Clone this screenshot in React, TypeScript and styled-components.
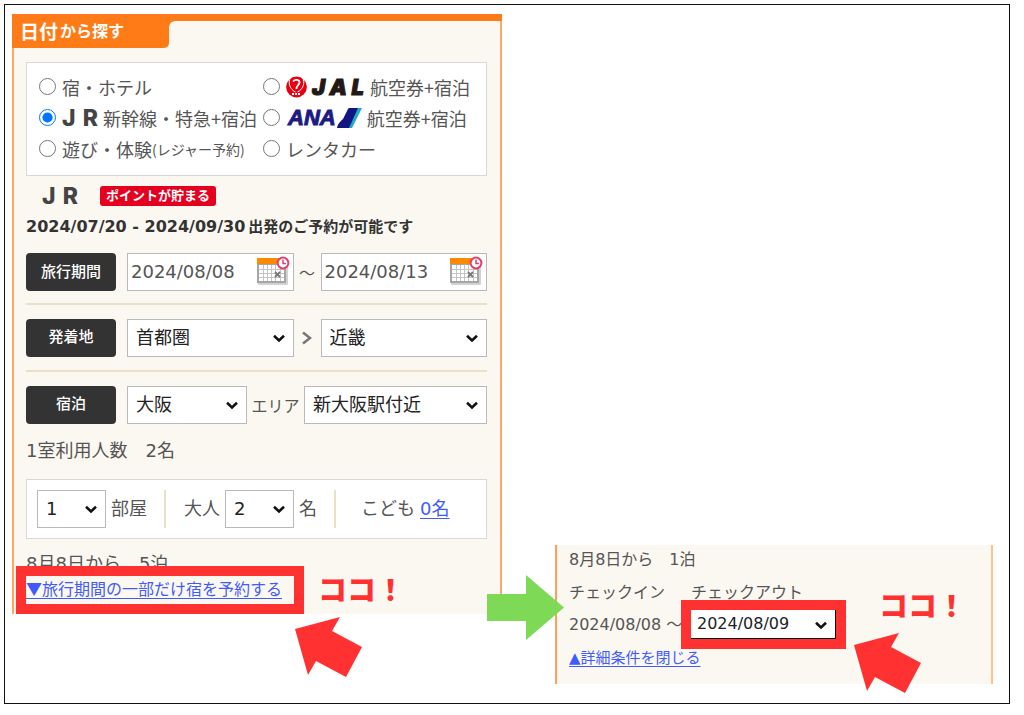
import React from "react";
import styled, { createGlobalStyle } from "styled-components";

const ORANGE = "#ff7b17";
const CREAM = "#fbf8f1";
const RED = "#ff3131";

const GlobalStyle = createGlobalStyle`
  *, *::before, *::after { box-sizing: border-box; }
  body {
    margin: 0;
    background: #fff;
    color: #555;
    font-family: "DejaVu Sans", "Noto Sans CJK JP", sans-serif;
    font-size: 18px;
    line-height: 24px;
  }
  p, h1 { margin: 0; }
`;

const Frame = styled.main`
  margin: 4px 14px 11px 4px;
  border: 1px solid #111;
  padding: 9px 16px 19px 7px;
  display: grid;
  grid-template-columns: 490fr 53fr 438fr;
  align-items: start;
`;

const SearchPanel = styled.form`
  grid-column: 1;
  background: ${CREAM};
  border: solid #ffa862;
  border-width: 0 2px;
  position: relative;
`;

const PanelHeader = styled.header`
  display: flex;
  margin: 0 -2px;
  border-top: 7px solid ${ORANGE};
`;

const Tab = styled.h1`
  display: flex;
  align-items: center;
  gap: 2px;
  width: 157px;
  height: 27px;
  padding: 0 8px 6px;
  background: ${ORANGE};
  border-radius: 0 0 5px 0;
  color: #fff;
  font-size: 19px;
  font-weight: 700;
  line-height: 20px;

  small { font-size: 16px; }
`;

const TabCorner = styled.span`
  width: 5px;
  height: 5px;
  background: radial-gradient(circle at 5px 5px, ${CREAM} 4px, ${ORANGE} 5px);
`;

const PanelBody = styled.div`
  padding: 14px 13px 10px 12px;
`;

const WhiteBox = styled.div`
  background: #fff;
  border: 1px solid #d8d8d8;
`;

const PlanBox = styled(WhiteBox)`
  display: grid;
  grid-template-columns: 224fr 213fr;
  grid-auto-rows: 31px;
  padding: 8px 10px 11px 12px;
`;

const PlanLabel = styled.label`
  display: flex;
  align-items: center;
  font-family: "Noto Sans CJK JP", sans-serif;
  white-space: nowrap;

  small { font-size: 14px; }
`;

const Radio = styled.input`
  flex: none;
  width: 17px;
  height: 17px;
  margin: 0 6px 0 0;
`;

const JrMark = styled.b`
  display: inline-flex;
  justify-content: space-between;
  width: 36px;
  margin-right: 5px;
  color: #444;
  font: 800 23px/24px Inter, sans-serif;
`;

const JalMark = styled.b`
  display: inline-flex;
  justify-content: space-between;
  width: 52px;
  margin: 0 6px 0 5px;
  color: #231815;
  font: italic 900 22px/24px Inter, sans-serif;
  -webkit-text-stroke: 1px #231815;
`;

const AnaMark = styled.b`
  margin: 0 1px 0 2px;
  color: #1d1a86;
  font: italic 700 22px/24px "Liberation Sans", sans-serif;
  -webkit-text-stroke: 1px #1d1a86;
`;

const LogoSvg = styled.svg`
  flex: none;
  margin-right: ${(p: { $gap?: number }) => p.$gap ?? 0}px;
`;

const BrandRow = styled.div`
  display: flex;
  align-items: center;
  gap: 17px;
  margin-top: 8px;
  padding-left: 16px;
`;

const PointBadge = styled.span`
  padding: 0 6px;
  border-radius: 3px;
  background: #e5001f;
  color: #fff;
  font-size: 13px;
  font-weight: 700;
  line-height: 20px;
`;

const Notice = styled.p`
  display: flex;
  align-items: center;
  gap: 3px;
  margin: 7px 0 14px;
  color: #333;
  font-size: 15px;
  font-weight: 700;
  white-space: nowrap;

  time { font-size: 16px; }
`;

const FieldRow = styled.div`
  display: flex;
  align-items: center;
  height: 38px;

  & + & {
    height: 67px;
    border-top: 2px solid #e9e0ca;
  }
`;

const Fields = styled.div`
  display: flex;
  flex-direction: column;

  ${FieldRow}:first-child { margin-bottom: 12px; }
`;

const FieldButton = styled.button`
  flex: none;
  width: 90px;
  height: 38px;
  margin-right: 11px;
  border: 0;
  border-radius: 4px;
  padding: 0 0 3px;
  background: #333;
  color: #fff;
  font: 500 15px/20px "Noto Sans CJK JP", sans-serif;
`;

const Control = styled.span`
  position: relative;
  display: block;
  flex: ${(p: { $flex?: string }) => p.$flex ?? "1 1 0"};
  min-width: 0;
  height: 38px;
`;

const DateInput = styled.input`
  width: 100%;
  height: 100%;
  border: 1px solid #b9b9b9;
  border-radius: 0;
  padding: 0 38px 2px 3px;
  background: #fff;
  color: #555;
  font: inherit;
`;

const CalendarButton = styled.button`
  position: absolute;
  top: 3px;
  right: 4px;
  width: 34px;
  height: 30px;
  border: 0;
  padding: 0;
  background: none;

  svg { display: block; }
`;

const Select = styled.select`
  appearance: none;
  width: 100%;
  height: 100%;
  border: 1px solid #b9b9b9;
  border-radius: 0;
  padding: 0 22px 0 8px;
  background: #fff;
  color: #222;
  font: inherit;
`;

const Chevron = styled.svg`
  position: absolute;
  top: 50%;
  right: 8px;
  margin-top: -4px;
  pointer-events: none;
`;

const Joiner = styled.span`
  flex: none;
  width: ${(p: { $width: number }) => p.$width}px;
  text-align: center;
  font-family: "Noto Sans CJK JP", sans-serif;
  font-size: 16px;
`;

const RoomCaption = styled.p`
  margin-top: 2px;
`;

const RoomBox = styled(WhiteBox)`
  display: flex;
  align-items: center;
  height: 60px;
  margin: 16px 0 13px;
  padding: 0 10px;
  white-space: nowrap;
`;

const RoomGroup = styled.label`
  display: flex;
  align-items: center;
  gap: 5px;
  padding-right: 17px;

  & + & {
    height: 38px;
    border-left: 2px solid #e9e0ca;
    padding-left: 18px;
  }
`;

const ChildGroup = styled.span`
  display: flex;
  align-items: center;
  gap: 5px;
  height: 38px;
  border-left: 2px solid #e9e0ca;
  padding-left: 25px;
`;

const Link = styled.a`
  color: #3f5bff;
  text-decoration: underline;
  text-underline-offset: 3px;
  text-decoration-thickness: 1px;
  white-space: nowrap;
`;

const PartialStayLink = styled(Link)`
  font-family: "Noto Sans CJK JP", sans-serif;
  font-size: 16px;
`;

const CloseLink = styled(Link)`
  font-size: 15px;
`;

const Marked = styled.div`
  position: relative;
  width: ${(p: { $width: number }) => p.$width}px;
  height: ${(p: { $height: number }) => p.$height}px;
`;

const MarkFrame = styled.span`
  position: absolute;
  inset: -10px;
  border: 10px solid ${RED};
  pointer-events: none;
`;

const Callout = styled.strong`
  position: absolute;
  left: 100%;
  top: ${(p: { $top: number }) => p.$top}px;
  margin-left: ${(p: { $offset: number }) => p.$offset}px;
  color: ${RED};
  font: 900 29px/32px "Noto Sans CJK JP", sans-serif;
  white-space: nowrap;
`;

const Pointer = styled.svg`
  position: absolute;
  left: 100%;
  top: ${(p: { $top: number }) => p.$top}px;
  margin-left: ${(p: { $offset: number }) => p.$offset}px;
  z-index: 1;
`;

const NextArrow = styled.svg`
  position: absolute;
  right: -64px;
  bottom: -26px;
  z-index: 1;
`;

const StayPanel = styled.section`
  grid-column: 3;
  margin-top: 531px;
  height: 139px;
  padding: 3px 12px 0;
  background: ${CREAM};
  border: solid #ffa05a;
  border-width: 0 2px;
  border-right-color: #ffc08a;
  font-size: 16px;
`;

const StayGrid = styled.div`
  display: grid;
  grid-template-columns: 122px 1fr;
  row-gap: 5px;
  margin: 9px 0 7px;
  align-items: center;
  white-space: nowrap;
`;

const StaySelect = styled(Select)`
  display: block;
  border: 0;
  border-right: 1px solid #000;
  border-bottom: 1px solid #000;
  padding-left: 6px;
`;

function DropIcon() {
  return (
    <Chevron width="14" height="9" viewBox="0 0 14 9" aria-hidden="true">
      <path d="M2 1.8 7 6.4 12 1.8" fill="none" stroke="#111" strokeWidth="2.6" />
    </Chevron>
  );
}

function PickList({ label, value, flex }: { label: string; value: string; flex?: string }) {
  return (
    <Control $flex={flex}>
      <Select aria-label={label} defaultValue={value}>
        <option>{value}</option>
      </Select>
      <DropIcon />
    </Control>
  );
}

function CalendarIcon() {
  return (
    <svg width="34" height="30" viewBox="0 0 34 30" aria-hidden="true">
      <rect x="2" y="5" width="30" height="24" rx="1" fill="#d2d2d2" />
      <rect x="1" y="3" width="29" height="24" fill="#a6a6a6" />
      <rect x="3" y="9" width="25" height="16" fill="#fff" />
      <rect x="1" y="2" width="29" height="6" fill="#ff8a00" />
      <path
        d="M3 13.500H28M3 17.500H28M3 21.500H28M7.500 9V25M11.500 9V25M15.500 9V25M19.500 9V25M24.500 9V25"
        stroke="#c4c4c4"
        fill="none"
      />
      <path d="m19 16 5 5m0-5-5 5" stroke="#777" strokeWidth="1.800" />
      <circle cx="27" cy="7" r="5.400" fill="#fff" stroke="#e0406a" strokeWidth="2" />
      <path d="M27 3.500V7.500H30" stroke="#e0406a" strokeWidth="1.500" fill="none" />
    </svg>
  );
}

function DateField({ label, value }: { label: string; value: string }) {
  return (
    <Control>
      <DateInput type="text" aria-label={label} defaultValue={value} />
      <CalendarButton type="button" aria-label={`${label}のカレンダー`}>
        <CalendarIcon />
      </CalendarButton>
    </Control>
  );
}

function Jr() {
  return (
    <JrMark>
      <span>J</span>
      <span>R</span>
    </JrMark>
  );
}

function CraneLogo() {
  return (
    <LogoSvg width="21" height="22" viewBox="0 0 21 22" aria-hidden="true">
      <circle cx="10.500" cy="11" r="10.400" fill="#e60012" />
      <path
        d="M4.500 1.500C1.500 7 4 13.500 9.500 16"
        fill="none"
        stroke="#fff"
        strokeWidth="1"
      />
      <path
        d="M7 5.500C9 3 13.500 3.500 13.500 6.500C13.500 9 10 9.500 10.500 13"
        fill="none"
        stroke="#fff"
        strokeWidth="1.800"
      />
      <path d="M16.500 1.500C19.500 7 17 13.500 11.500 16" fill="none" stroke="#fff" strokeWidth="1" />
      <path d="M6 18H15" stroke="#fff" strokeWidth="2" strokeDasharray="2 1" />
    </LogoSvg>
  );
}

function AnaWing() {
  return (
    <LogoSvg $gap={5} width="25" height="20" viewBox="0 0 25 20" aria-hidden="true">
      <path d="M0 20C1 15 4 13 6 11L11 1C11.500 0 12 0 13 0H22L13 20Z" fill="#131583" />
      <path d="M21 0H25L15 20H12Z" fill="#21a9c9" />
    </LogoSvg>
  );
}

function RedPointer({ top, offset }: { top: number; offset: number }) {
  return (
    <Pointer $top={top} $offset={offset} width="67" height="61" viewBox="0 0 67 61" aria-hidden="true">
      <path d="M0 13 45 1 37 15 67 31 51 61 21 45 13 59Z" fill={RED} />
    </Pointer>
  );
}

export default function App() {
  return (
    <>
      <GlobalStyle />
      <Frame>
        <SearchPanel>
          <PanelHeader>
            <Tab>
              日付<small>から探す</small>
            </Tab>
            <TabCorner />
          </PanelHeader>
          <PanelBody>
            <PlanBox>
              <PlanLabel>
                <Radio type="radio" name="plan" />
                宿・ホテル
              </PlanLabel>
              <PlanLabel>
                <Radio type="radio" name="plan" />
                <CraneLogo />
                <JalMark>
                  <span>J</span>
                  <span>A</span>
                  <span>L</span>
                </JalMark>
                航空券+宿泊
              </PlanLabel>
              <PlanLabel>
                <Radio type="radio" name="plan" defaultChecked />
                <Jr />
                新幹線・特急+宿泊
              </PlanLabel>
              <PlanLabel>
                <Radio type="radio" name="plan" />
                <AnaMark>ANA</AnaMark>
                <AnaWing />
                航空券+宿泊
              </PlanLabel>
              <PlanLabel>
                <Radio type="radio" name="plan" />
                遊び・体験<small>(レジャー予約)</small>
              </PlanLabel>
              <PlanLabel>
                <Radio type="radio" name="plan" />
                レンタカー
              </PlanLabel>
            </PlanBox>

            <BrandRow>
              <Jr />
              <PointBadge>ポイントが貯まる</PointBadge>
            </BrandRow>
            <Notice>
              <time>2024/07/20 - 2024/09/30</time>
              <span>出発のご予約が可能です</span>
            </Notice>

            <Fields>
              <FieldRow>
                <FieldButton type="button">旅行期間</FieldButton>
                <DateField label="出発日" value="2024/08/08" />
                <Joiner $width={27}>～</Joiner>
                <DateField label="帰着日" value="2024/08/13" />
              </FieldRow>
              <FieldRow>
                <FieldButton type="button">発着地</FieldButton>
                <PickList label="出発地" value="首都圏" />
                <Joiner $width={27}>
                  <svg width="10" height="14" viewBox="0 0 10 14" aria-hidden="true">
                    <path d="M1 1.500 8 7 1 12.500" fill="none" stroke="#777" strokeWidth="2.600" />
                  </svg>
                </Joiner>
                <PickList label="到着地" value="近畿" />
              </FieldRow>
              <FieldRow>
                <FieldButton type="button">宿泊</FieldButton>
                <PickList label="都道府県" value="大阪" flex="120 1 0" />
                <Joiner $width={57}>エリア</Joiner>
                <PickList label="エリア" value="新大阪駅付近" flex="183 1 0" />
              </FieldRow>
            </Fields>

            <RoomCaption>1室利用人数　2名</RoomCaption>
            <RoomBox>
              <RoomGroup>
                <PickList label="部屋数" value="1" flex="0 0 69px" />
                部屋
              </RoomGroup>
              <RoomGroup>
                大人
                <PickList label="大人の人数" value="2" flex="0 0 69px" />
                名
              </RoomGroup>
              <ChildGroup>
                こども <Link href="#children">0名</Link>
              </ChildGroup>
            </RoomBox>

            <p>8月8日から　5泊</p>
            <Marked $width={268} $height={28}>
              <PartialStayLink href="#part">▼旅行期間の一部だけ宿を予約する</PartialStayLink>
              <MarkFrame />
              <Callout $top={-4} $offset={24}>ココ！</Callout>
              <RedPointer top={40} offset={1} />
            </Marked>
          </PanelBody>
          <NextArrow width="77" height="65" viewBox="0 0 77 65" aria-hidden="true">
            <path d="M0 19H39V0L77 32.500 39 65V46H0Z" fill="#7ed957" />
          </NextArrow>
        </SearchPanel>

        <StayPanel>
          <p>8月8日から　1泊</p>
          <StayGrid>
            <span>チェックイン</span>
            <span>チェックアウト</span>
            <span>2024/08/08 ～</span>
            <Marked $width={145} $height={29}>
              <StaySelect aria-label="チェックアウト" defaultValue="2024/08/09">
                <option>2024/08/09</option>
              </StaySelect>
              <DropIcon />
              <MarkFrame />
              <Callout $top={-22} $offset={43}>ココ！</Callout>
              <RedPointer top={22} offset={18} />
            </Marked>
          </StayGrid>
          <CloseLink href="#close">▲詳細条件を閉じる</CloseLink>
        </StayPanel>
      </Frame>
    </>
  );
}
